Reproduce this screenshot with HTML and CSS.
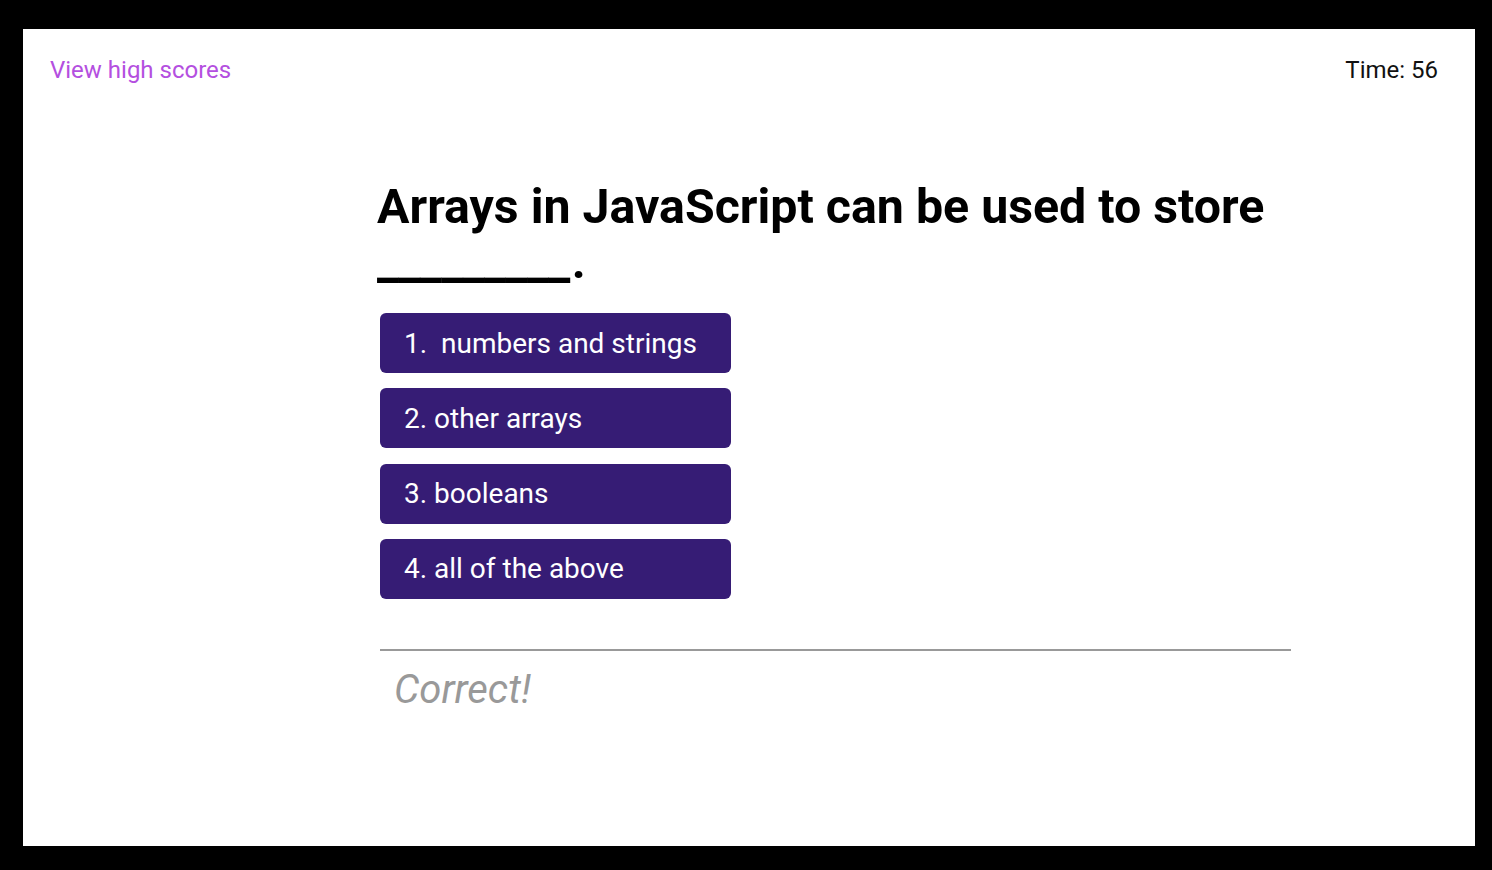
FILE: index.html
```html
<!DOCTYPE html>
<html lang="en">
<head>
<meta charset="utf-8">
<title>Code Quiz</title>
<link rel="stylesheet" href="styles.css">
</head>
<body>
<div class="panel">
  <header class="topbar">
    <a class="scores" href="#">View high scores</a>
    <span class="timer">Time: 56</span>
  </header>
  <main class="quiz">
    <h1 class="question">Arrays in JavaScript can be used to store <span class="blank">_________</span>.</h1>
    <div class="choices">
      <button class="choice">1.&nbsp; numbers and strings</button>
      <button class="choice">2. other arrays</button>
      <button class="choice">3. booleans</button>
      <button class="choice">4. all of the above</button>
    </div>
    <div class="feedback">
      <p class="result">Correct!</p>
    </div>
  </main>
</div>
</body>
</html>
```
FILE: styles.css
```css
html, body {
  margin: 0;
  padding: 0;
  background: #000;
}
body {
  padding: 29px 17px 24px 23px;
  font-family: Roboto, "Liberation Sans", sans-serif;
}
.panel {
  background: #fff;
  height: 817px;
  box-sizing: border-box;
  padding-top: 27px;
}
.topbar {
  display: flex;
  justify-content: space-between;
  padding: 0 37px 0 27px;
  font-size: 24px;
}
.scores {
  color: #b44fe0;
  text-decoration: none;
}
.timer {
  color: #111;
}
.quiz {
  margin-left: 354px;
  width: 914px;
  padding-top: 95px;
}
.question {
  margin: 0;
  font-size: 48.3px;
  font-weight: 700;
  line-height: 55px;
  color: #000;
}
.blank {
  font-size: 49.5px;
  letter-spacing: -0.6px;
  padding-right: 2px;
}
.choices {
  display: flex;
  flex-direction: column;
  align-items: flex-start;
  gap: 15.3px;
  margin: 24px 0 0 3px;
}
.choice {
  width: 351px;
  height: 60px;
  border: none;
  border-radius: 6px;
  background: #361c75;
  color: #fff;
  font-family: Roboto, "Liberation Sans", sans-serif;
  font-size: 28px;
  text-align: left;
  padding: 0 0 0 24px;
}
.feedback {
  margin: 50px 0 0 3px;
  border-top: 2px solid #999;
  width: 911px;
}
.result {
  margin: 15px 0 0 14px;
  font-size: 40px;
  font-style: italic;
  color: #999;
}
```
